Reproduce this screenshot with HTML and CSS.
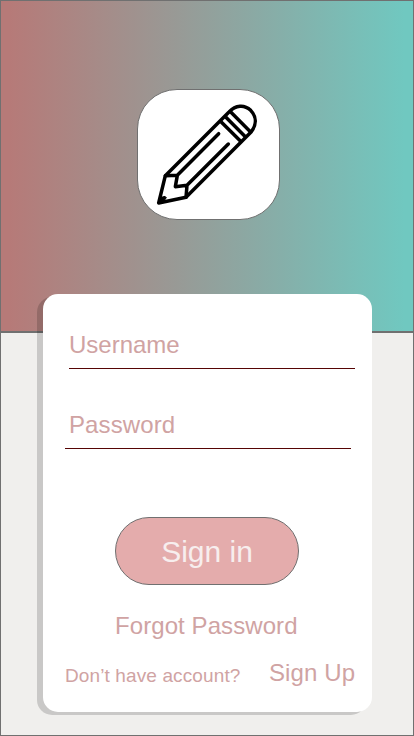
FILE: index.html
```html
<!DOCTYPE html>
<html lang="en">
<head>
<meta charset="utf-8">
<title>Sign in</title>
<link rel="stylesheet" href="styles.css">
</head>
<body>
<main class="screen">
  <header class="hero">
    <div class="logo">
      <svg class="pencil" viewBox="24 30 423 387" fill="none" stroke="#000" stroke-width="10.5" stroke-linecap="round" stroke-linejoin="round" aria-hidden="true">
        <path d="M106 287L297 96C317 75 343 73 362 91C380 110 380 134 364 155L168 352L86 369Z"/>
        <path d="M106 287L142 286L266 161M142 286L136 320L171 316L295 192M171 316L168 352"/>
        <path stroke-linecap="butt" d="M273 125L332 184M287 111L346 170M300 94L361 155"/>
        <path fill="#000" stroke-width="3" d="M94 352L105 349L109 353L101 364L86 370Z"/>
      </svg>
    </div>
  </header>
  <form class="card">
    <input class="field username" type="text" placeholder="Username">
    <input class="field password" type="text" placeholder="Password">
    <button class="signin" type="button">Sign in</button>
    <a class="forgot">Forgot Password</a>
    <div class="signup">
      <span class="question">Don’t have account?</span>
      <a class="link">Sign Up</a>
    </div>
  </form>
</main>
</body>
</html>
```
FILE: styles.css
```css
* {
  box-sizing: border-box;
}

body {
  margin: 0;
  font-family: "Liberation Sans", Arial, sans-serif;
}

.screen {
  width: 414px;
  height: 736px;
  background: #f0efed;
  border: 1px solid #707070;
  border-top: 0;
  overflow: hidden;
}

.hero {
  height: 333px;
  margin: 0 -1px;
  padding-top: 88px;
  border: 1px solid #707070;
  border-bottom-width: 2px;
  background: linear-gradient(90deg, #b67a78 0%, #b67a78 2%, #989a96 43%, #70c8c0 98%, #70c8c0 100%);
}

.logo {
  width: 143px;
  height: 131px;
  margin-left: 136px;
  background: #fff;
  border: 1px solid #707070;
  border-radius: 40px;
}

.pencil {
  display: block;
  width: 141px;
  height: 129px;
}

.card {
  position: relative;
  display: flex;
  flex-direction: column;
  width: 329px;
  height: 418px;
  margin: -39px 0 0 42px;
  padding-top: 32px;
  background: #fff;
  border-radius: 15px;
  box-shadow: -6px 3px 0 rgba(0, 0, 0, 0.16);
  color: #d0a3a3;
  font-size: 24px;
  line-height: 28px;
}

.field {
  width: 286px;
  height: 43px;
  padding: 0 0 4px;
  border: 0;
  border-bottom: 1px solid #560404;
  background: none;
  font: inherit;
  outline: 0;
}

.field::placeholder {
  color: #d0a3a3;
  opacity: 1;
}

.username {
  margin-left: 26px;
  padding-left: 0;
}

.password {
  margin: 37px 0 0 22px;
  padding-left: 4px;
  letter-spacing: 0.1px;
}

.signin {
  width: 184px;
  height: 68px;
  margin: 68px 0 0 72px;
  padding: 2px 0 0;
  border: 1px solid #707070;
  border-radius: 34px;
  background: #e4acac;
  color: #f7eeee;
  font: 30px/34px "Liberation Sans", Arial, sans-serif;
}

.forgot {
  margin: 27px 0 0 72px;
  letter-spacing: 0.08px;
}

.signup {
  display: flex;
  align-items: flex-start;
  margin: 19px 0 0 22px;
  white-space: nowrap;
}

.question {
  width: 204px;
  padding-top: 3px;
  font-size: 19px;
  letter-spacing: 0.12px;
}

.link {
  letter-spacing: 0.1px;
}
```
